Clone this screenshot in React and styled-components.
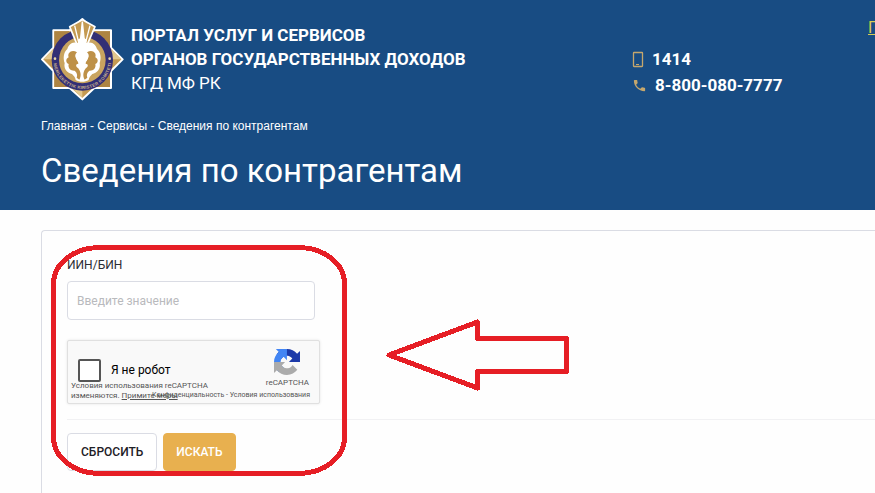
import React, { useState } from 'react';
import styled, { createGlobalStyle } from 'styled-components';
import { MdPhone } from 'react-icons/md';

const GlobalStyle = createGlobalStyle`
  * {
    box-sizing: border-box;
  }
  body {
    margin: 0;
    background: #FEFEFE;
    color: #2A2C33;
    font-family: Roboto, 'Open Sans', sans-serif;
  }
`;

const Page = styled.div`
  display: flex;
  flex-direction: column;
  height: 100vh;
  overflow: hidden;
`;

const Header = styled.header`
  background: #184C83;
  color: #FFFFFF;
  padding: 16px 0 18px 41px;
`;

const TopRow = styled.div`
  display: flex;
  align-items: flex-start;
  height: 86px;
`;

const Brand = styled.div`
  display: flex;
  flex: 1;
  gap: 6px;
`;

const BrandText = styled.div`
  padding-top: 7px;
  font-size: 17px;
  line-height: 24px;
`;

const BrandLine = styled.div`
  font-weight: ${props => props.$light ? 400 : 700};
`;

const Contacts = styled.div`
  width: 236px;
  padding-top: 30px;
`;

const Contact = styled.div`
  display: flex;
  align-items: center;
  gap: 8px;
  height: 26px;
  font-size: 17px;
  font-weight: 700;
`;

const CabinetLink = styled.a`
  width: 7px;
  overflow: hidden;
  color: #D6CC55;
  font-size: 16px;
  line-height: 24px;
`;

const Crumbs = styled.nav`
  margin-top: 16px;
  font-family: 'Liberation Sans', Arial, sans-serif;
  font-size: 12px;
  line-height: 16px;
`;

const Crumb = styled.a`
  color: inherit;
  text-decoration: none;
`;

const Title = styled.h1`
  margin: 16px 0 0;
  font-size: 33px;
  line-height: 42px;
  font-weight: 400;
`;

const Panel = styled.main`
  position: relative;
  flex: 1;
  margin: 20px 0 0 41px;
  padding: 25px 0 0 25px;
  border: 1px solid #DADCE4;
  border-width: 1px 0 0 1px;
  border-radius: 4px 0 0 0;
`;

const Field = styled.div`
  display: flex;
  flex-direction: column;
  gap: 7px;
`;

const FieldLabel = styled.label`
  font-size: 12px;
  line-height: 18px;
`;

const TextInput = styled.input`
  width: 248px;
  height: 39px;
  padding: 0 9px;
  border: 1px solid #DADCE4;
  border-radius: 4px;
  background: #FFFFFF;
  font-family: inherit;
  font-size: 12px;
  &::placeholder {
    color: #B9BABD;
  }
`;

const Captcha = styled.div`
  position: relative;
  display: flex;
  justify-content: space-between;
  width: 253px;
  height: 64px;
  margin-top: 20px;
  padding: 8px 10px 0;
  border: 1px solid #E0E0E0;
  border-radius: 2px;
  background: #F9F9F9;
  box-shadow: 0 0 3px rgba(0, 0, 0, 0.1);
`;

const CheckLabel = styled.label`
  display: flex;
  align-items: center;
  gap: 10px;
  height: 42px;
  color: #000000;
  font-size: 12px;
`;

const Checkbox = styled.input`
  appearance: none;
  width: 23px;
  height: 23px;
  margin: 0;
  border: 2px solid #555555;
  border-radius: 2px;
  background: #FFFFFF;
`;

const CaptchaBrand = styled.div`
  display: flex;
  flex-direction: column;
  align-items: center;
  color: #555555;
  font-size: 8px;
  line-height: 16px;
`;

const CaptchaNotice = styled.div`
  position: absolute;
  left: 3px;
  bottom: 2px;
  color: #555555;
  font-size: 8px;
  line-height: 10px;
`;

const CaptchaTerms = styled.div`
  position: absolute;
  right: 9px;
  bottom: 2px;
  color: #555555;
  font-size: 7px;
  line-height: 12px;
`;

const SmallLink = styled.a`
  color: inherit;
  text-decoration: ${props => props.$underlined ? 'underline' : 'none'};
`;

const Actions = styled.div`
  display: flex;
  gap: 6px;
  margin-top: 15px;
  padding-top: 13px;
  border-top: 1px solid #F1F1F3;
`;

const Button = styled.button`
  height: 38px;
  padding: 0 ${props => props.$primary ? 12 : 13}px;
  border: 1px solid ${props => props.$primary ? '#E8B04F' : '#DADCE4'};
  border-radius: 4px;
  background: ${props => props.$primary ? '#E8B04F' : '#FFFFFF'};
  color: ${props => props.$primary ? '#FFFFFF' : '#1E2026'};
  font-family: inherit;
  font-size: 12px;
  font-weight: 500;
  cursor: pointer;
`;

// drawn over the form, so it must not catch clicks
const Marks = styled.svg`
  position: absolute;
  top: 14px;
  left: 9px;
  pointer-events: none;
`;

const Emblem = () => (
  <svg width="84" height="85" viewBox="36 25 252 255" role="img" aria-label="КГД МФ РК">
    <path
      d="M160 34L196 68H246V120L281 155L246 190V241H196L160 275L122 241H73V190L39 155L73 120V68H122Z"
      fill="#C49A52"
      stroke="#FFFFFF"
      strokeWidth="6"
      strokeLinejoin="round"
    />
    <path d="M76 71L122 71L76 120ZM243 71H196L243 120ZM76 238V190L122 238ZM243 238V190L196 238Z" fill="#AD8442" />
    <path d="M43 155L73 124V155ZM277 155L246 124V155ZM160 270L128 241H160Z" fill="#E2C78D" />
    <circle cx="160" cy="157" r="92" fill="#332F75" />
    <circle cx="160" cy="157" r="70" fill="#C9A45F" />
    <path id="ring" d="M83 157A77 77 0 0 0 237 157" fill="none" />
    <text fill="#CBB48F" fontFamily="Liberation Sans, sans-serif" fontSize="13" fontWeight="700" dy="10">
      <textPath href="#ring" startOffset="50%" textAnchor="middle">MEMLEKETTIK KIRISTER KOMITETI</textPath>
    </text>
    <circle cx="78" cy="153" r="4" fill="#E9D6A8" />
    <circle cx="242" cy="153" r="4" fill="#E9D6A8" />
    <path d="M160 36L122 57L143 108H176L198 57Z" fill="#C49A52" stroke="#FFFFFF" strokeWidth="5" strokeLinejoin="round" />
    <path d="M160 42L153 110H167ZM137 54L150 108M183 54L169 108" fill="#FFFFFF" stroke="#FFFFFF" strokeWidth="4" />
    <path d="M146 96L160 88L174 96L171 108C188 99 200 111 204 124C216 134 217 154 212 166C216 184 203 197 190 199C184 205 180 210 179 217C168 224 151 224 140 217C139 210 135 205 129 199C116 197 103 184 107 166C102 154 103 134 115 124C119 111 131 99 148 108Z" fill="#FFFFFF" />
    <g fill="#BE9148">
      <path d="M144 134C128 124 114 136 119 149C109 153 110 166 119 169C116 182 126 190 137 189C144 194 146 202 143 210L151 216C158 204 155 190 147 181C139 176 140 169 148 168C149 160 141 154 139 147C138 142 140 138 144 134Z" />
      <path d="M174 134C190 124 204 136 199 149C209 153 208 166 199 169C202 182 192 190 181 189C174 194 172 202 175 210L167 216C160 204 163 190 171 181C179 176 178 169 170 168C169 160 177 154 179 147C180 142 178 138 174 134Z" />
    </g>
    <path d="M159 131C148 134 139 144 142 154C145 163 153 166 155 174L159 208L163 174C165 166 173 163 176 154C179 144 170 134 159 131Z" fill="#FFFFFF" />
  </svg>
);

const MobileIcon = () => (
  <svg width="12" height="17" viewBox="0 0 12 17" fill="none" stroke="#C5A76D">
    <rect x="1.5" y="1.5" width="9" height="14" rx="0.5" strokeWidth="1.3" />
    <path d="M4 13.5H7" strokeWidth="1" />
  </svg>
);

const CaptchaLogo = () => (
  <svg width="26" height="26" viewBox="0 0 64 64">
    <path d="M64 31.955l-.033-1.37V4.687l-7.16 7.16C50.948 4.674 42.033.093 32.05.093c-10.4 0-19.622 4.96-25.458 12.64l11.736 11.86a15.55 15.55 0 0 1 4.754-5.334c2.05-1.6 4.952-2.906 8.968-2.906.485 0 .86.057 1.135.163 4.976.393 9.288 3.14 11.828 7.124l-8.307 8.307L64 31.953" fill="#1C3AA9" />
    <path d="M31.862.094l-1.37.033H4.594l7.16 7.16C4.58 13.147 0 22.06 0 32.046c0 10.4 4.96 19.622 12.64 25.458L24.5 45.768a15.55 15.55 0 0 1-5.334-4.754c-1.6-2.05-2.906-4.952-2.906-8.968 0-.485.057-.86.163-1.135.393-4.976 3.14-9.288 7.124-11.828l8.307 8.307L31.86.095" fill="#4285F4" />
    <path d="M.001 32.045l.033 1.37v25.898l7.16-7.16c5.86 7.173 14.774 11.754 24.76 11.754 10.4 0 19.622-4.96 25.458-12.64l-11.736-11.86a15.55 15.55 0 0 1-4.754 5.334c-2.05 1.6-4.952 2.906-8.968 2.906-.485 0-.86-.057-1.135-.163-4.976-.393-9.288-3.14-11.828-7.124l8.307-8.307c-10.522.04-22.4.066-27.295-.005" fill="#ABABAB" />
  </svg>
);

export default () => {
  const [ Bin, setBin ] = useState('');
  const [ Human, setHuman ] = useState(false);

  const reset = () => {
    setBin('');
    setHuman(false);
  };

  return (
    <Page>
      <GlobalStyle />
      <Header>
        <TopRow>
          <Brand>
            <Emblem />
            <BrandText>
              <BrandLine>ПОРТАЛ УСЛУГ И СЕРВИСОВ</BrandLine>
              <BrandLine>ОРГАНОВ ГОСУДАРСТВЕННЫХ ДОХОДОВ</BrandLine>
              <BrandLine $light>КГД МФ РК</BrandLine>
            </BrandText>
          </Brand>
          <Contacts>
            <Contact><MobileIcon />1414</Contact>
            <Contact><MdPhone size={15} color="#C5A76D" />8-800-080-7777</Contact>
          </Contacts>
          <CabinetLink href="#">П</CabinetLink>
        </TopRow>
        <Crumbs>
          <Crumb href="#">Главная</Crumb> - <Crumb href="#">Сервисы</Crumb> - Сведения по контрагентам
        </Crumbs>
        <Title>Сведения по контрагентам</Title>
      </Header>
      <Panel>
        <Field>
          <FieldLabel htmlFor="bin">ИИН/БИН</FieldLabel>
          <TextInput id="bin" placeholder="Введите значение" value={Bin} onChange={e => { setBin(e.target.value) }} />
        </Field>
        <Captcha>
          <CheckLabel>
            <Checkbox type="checkbox" checked={Human} onChange={e => { setHuman(e.target.checked) }} />
            Я не робот
          </CheckLabel>
          <CaptchaBrand>
            <CaptchaLogo />
            reCAPTCHA
          </CaptchaBrand>
          <CaptchaNotice>
            Условия использования reCAPTCHA<br />
            изменяются. <SmallLink href="#" $underlined>Примите меры</SmallLink>
          </CaptchaNotice>
          <CaptchaTerms>
            <SmallLink href="#">Конфиденциальность</SmallLink> - <SmallLink href="#">Условия использования</SmallLink>
          </CaptchaTerms>
        </Captcha>
        <Actions>
          <Button type="button" onClick={reset}>СБРОСИТЬ</Button>
          <Button type="submit" $primary>ИСКАТЬ</Button>
        </Actions>
        <Marks width="520" height="232" viewBox="0 0 520 232" fill="none" stroke="#E61E25" strokeWidth="5" shapeRendering="crispEdges">
          <rect x="2.5" y="2.5" width="291" height="226" rx="46" ry="36" />
          <path d="M338 110L426.5 77V93.5H515.5V126.5H426.5V143Z" strokeLinejoin="round" />
        </Marks>
      </Panel>
    </Page>
  );
};
